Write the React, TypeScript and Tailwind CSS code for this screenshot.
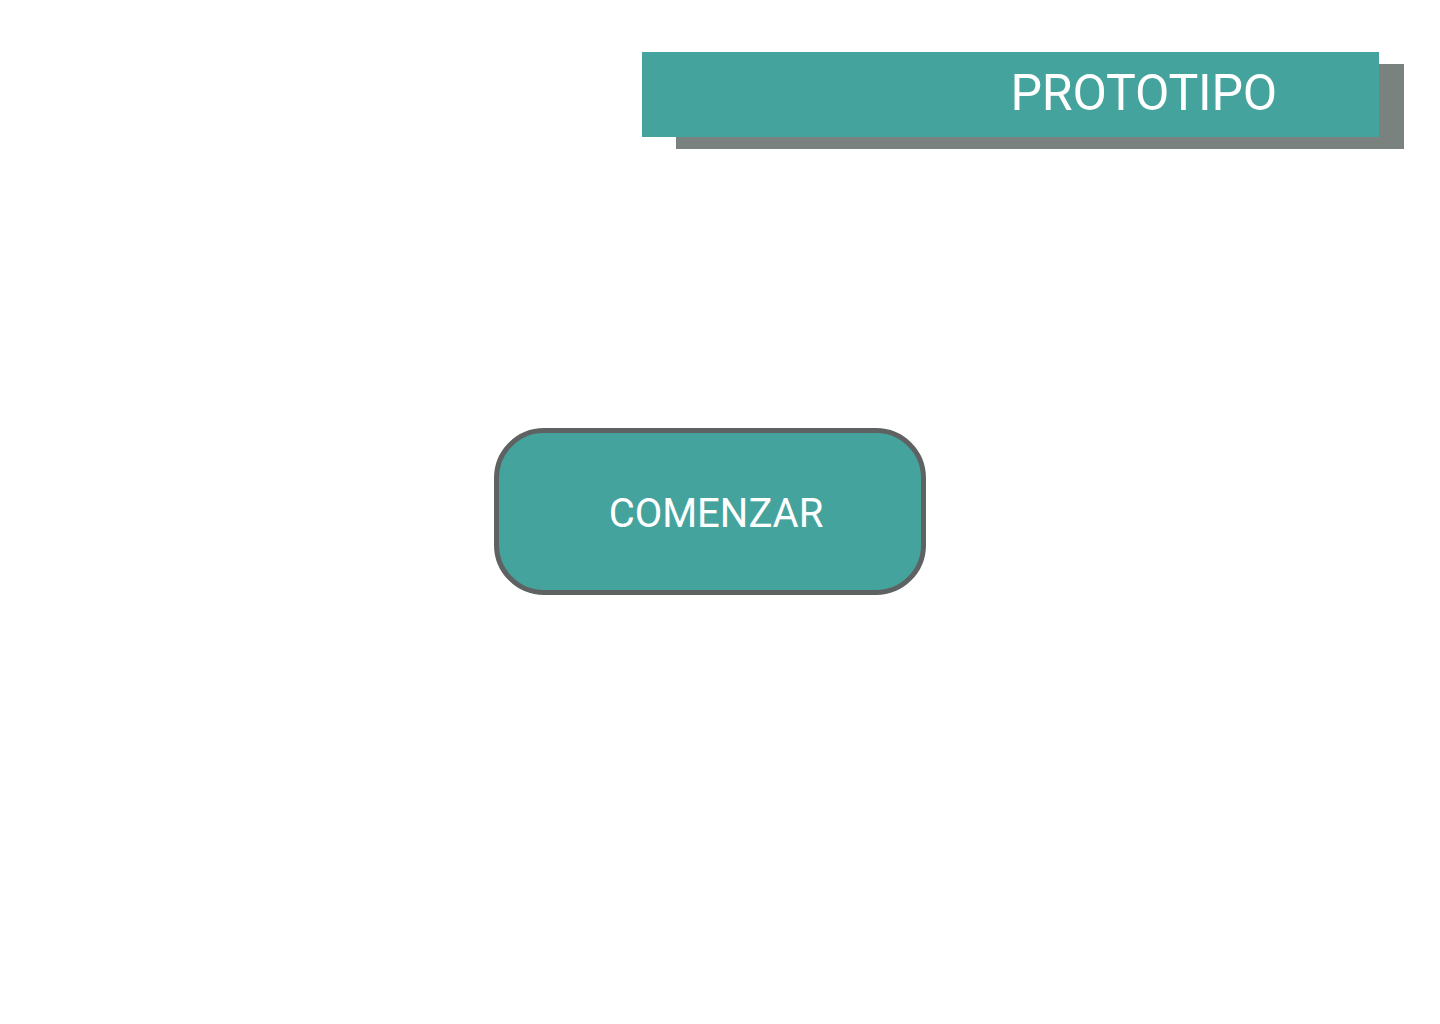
export default function App() {
  return (
    <div className="w-[1440px] h-[1024px] bg-white overflow-hidden" style={{ fontFamily: 'Roboto, "Open Sans", sans-serif' }}>
      <div className="pt-[52px] pl-[642px]">
        <div className="relative w-[737px] h-[85px]">
          <div className="absolute left-[34px] top-[12px] w-[728px] h-[85px] bg-[#7a8280]" />
          <div className="relative w-[737px] h-[85px] bg-[#45a39e] flex items-center justify-end pr-[102px] pb-[4px]">
            <span className="text-white text-[50px] leading-none font-normal tracking-[-0.2px]">PROTOTIPO</span>
          </div>
        </div>
      </div>
      <div className="pt-[291px] pl-[494px]">
        <button className="w-[432px] h-[167px] rounded-[50px] border-[5px] border-[#5f6262] bg-[#45a39e] flex items-center justify-center pl-[12px] pt-[4px]">
          <span className="text-white text-[40px] leading-none font-normal">COMENZAR</span>
        </button>
      </div>
    </div>
  );
}
